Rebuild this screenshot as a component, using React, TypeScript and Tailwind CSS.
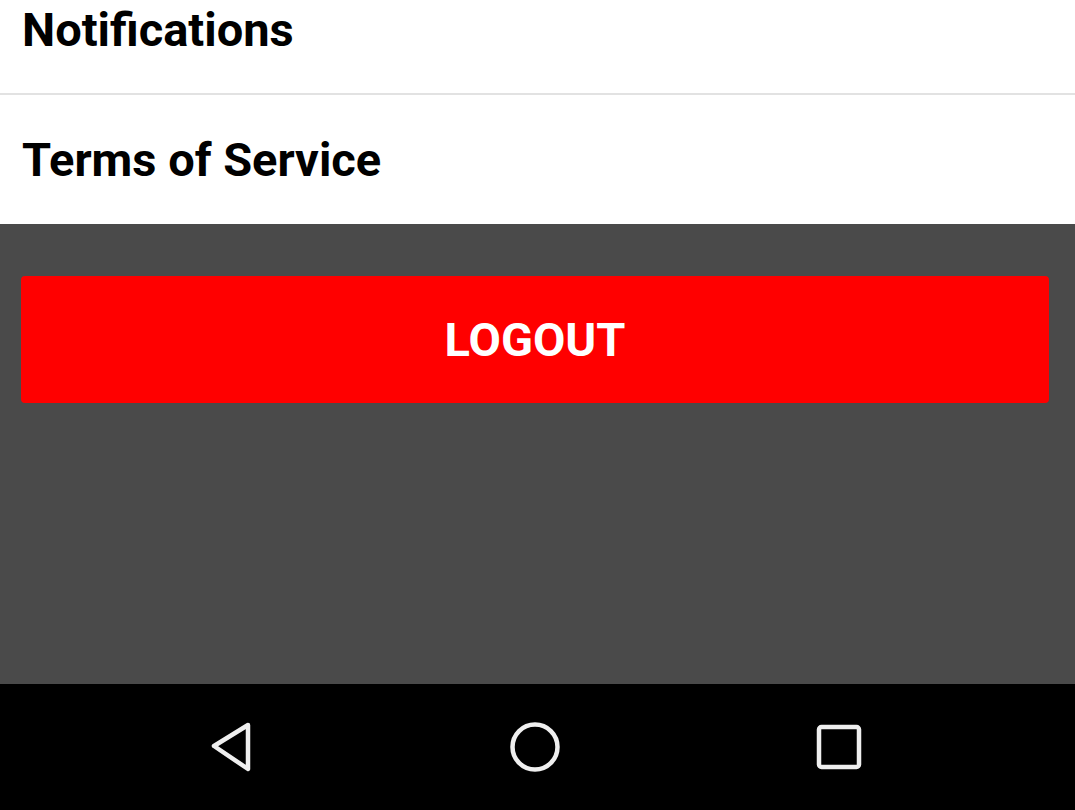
import React from 'react';

const font = { fontFamily: 'Roboto, "Noto Sans", sans-serif' };

const App: React.FC = () => {
  return (
    <div className="h-[810px] w-full overflow-hidden flex flex-col bg-[#4a4a4a]" style={font}>
      <div className="bg-white">
        <div className="h-[128px] mt-[-35px] flex items-center px-[22px]">
          <span className="text-[47px] font-bold text-black leading-none">Notifications</span>
        </div>
        <div className="h-[2px] bg-[#e2e2e2]" />
        <div className="h-[129px] flex items-center px-[22px]">
          <span className="text-[47px] font-bold text-black leading-none">Terms of Service</span>
        </div>
      </div>

      <div className="flex-1 pt-[52px] pl-[21px] pr-[26px]">
        <button className="w-full h-[127px] bg-[#ff0000] rounded-[4px] flex items-center justify-center">
          <span className="text-white text-[47px] font-bold leading-none">LOGOUT</span>
        </button>
      </div>

      <div className="h-[126px] bg-black flex items-center justify-center pr-[5px]">
        <div className="w-[304px] flex justify-center">
          <svg width="44" height="52" viewBox="0 0 44 52" fill="none">
            <path d="M39 4 L5 25 L39 48 Z" stroke="#efefef" strokeWidth="4.5" strokeLinejoin="round" />
          </svg>
        </div>
        <div className="w-[304px] flex justify-center">
          <svg width="52" height="52" viewBox="0 0 52 52" fill="none">
            <circle cx="26" cy="26" r="22.5" stroke="#efefef" strokeWidth="4.5" />
          </svg>
        </div>
        <div className="w-[304px] flex justify-center">
          <svg width="46" height="46" viewBox="0 0 46 46" fill="none">
            <rect x="3" y="3" width="40" height="40" rx="2.5" stroke="#efefef" strokeWidth="4.5" />
          </svg>
        </div>
      </div>
    </div>
  );
};

export default App;
